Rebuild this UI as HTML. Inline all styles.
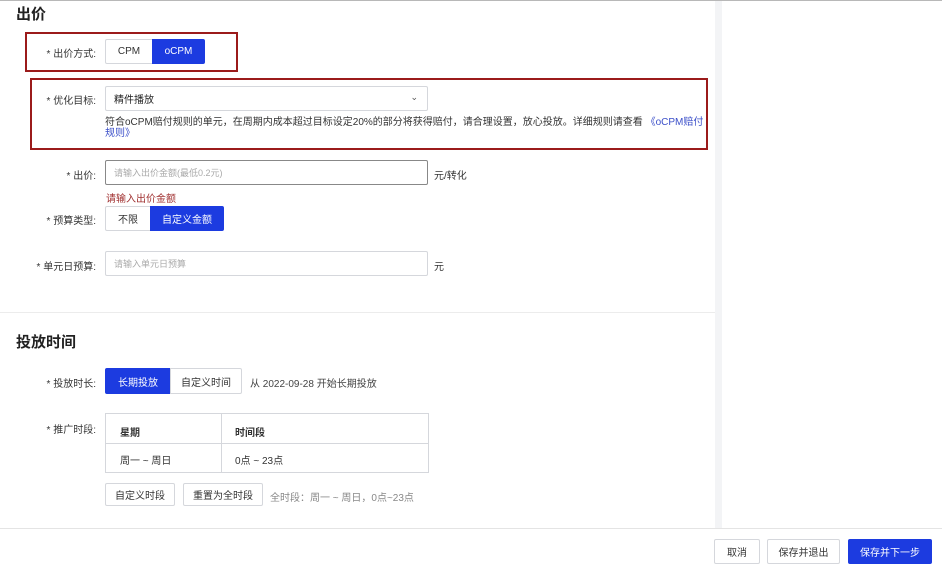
<!DOCTYPE html>
<html><head><meta charset="utf-8"><style>
*{box-sizing:border-box;margin:0;padding:0}
body{width:942px;height:568px;overflow:hidden;background:#f3f4f6;font-family:"Liberation Sans","Noto Sans CJK SC",sans-serif;font-size:10px;color:#333;position:relative}
.a{position:absolute}
.main{left:0;top:1px;width:715px;height:527px;background:#fff}
.right{left:722px;top:1px;width:220px;height:527px;background:#fff}
.h{font-size:15px;font-weight:bold;color:#222}
.lbl{font-size:10px;color:#333;text-align:right;width:96px;left:0}
.btn{position:absolute;border:1px solid #d5d7dc;background:#fff;font-size:10px;display:flex;align-items:center;justify-content:center;color:#333}
.pri{background:#1c3be0;color:#fff;border-color:#1c3be0}
.inp{position:absolute;border:1px solid #d5d7dc;border-radius:2px;background:#fff;font-size:9px;color:#aaa;padding-left:8px;display:flex;align-items:center}
.red{position:absolute;border:2px solid #9b1b1b}
</style></head><body>
<div class="a" style="left:0;top:0;width:942px;height:1px;background:#b8b8b8"></div>
<div class="a main"></div>
<div class="a right"></div>
<div class="a h" style="left:16px;top:3px">出价</div>

<div class="red" style="left:25px;top:32px;width:213px;height:40px"></div>
<div class="a lbl" style="top:45px">* 出价方式:</div>
<div class="btn" style="left:105px;top:39px;width:48px;height:25px;border-radius:2px 0 0 2px">CPM</div>
<div class="btn pri" style="left:152px;top:39px;width:53px;height:25px;border-radius:0 2px 2px 0">oCPM</div>

<div class="red" style="left:30px;top:78px;width:678px;height:72px"></div>
<div class="a lbl" style="top:92px">* 优化目标:</div>
<div class="inp" style="left:105px;top:86px;width:323px;height:25px;color:#222;font-size:10px">精件播放<span style="position:absolute;right:9px;top:5px;font-size:9px;color:#555">⌄</span></div>
<div class="a" style="left:105px;top:117px;width:600px;font-size:10px;line-height:11px;color:#333">符合oCPM赔付规则的单元，在周期内成本超过目标设定20%的部分将获得赔付，请合理设置，放心投放。详细规则请查看 <span style="color:#3b4fc9">《oCPM赔付规则》</span></div>

<div class="a lbl" style="top:167px">* 出价:</div>
<div class="inp" style="left:105px;top:160px;width:323px;height:25px;border-color:#888">请输入出价金额(最低0.2元)</div>
<div class="a" style="left:434px;top:167px">元/转化</div>
<div class="a" style="left:106px;top:190px;color:#a03030">请输入出价金额</div>

<div class="a lbl" style="top:212px">* 预算类型:</div>
<div class="btn" style="left:105px;top:206px;width:46px;height:25px;border-radius:2px 0 0 2px">不限</div>
<div class="btn pri" style="left:150px;top:206px;width:74px;height:25px;border-radius:0 2px 2px 0">自定义金额</div>

<div class="a lbl" style="top:258px">* 单元日预算:</div>
<div class="inp" style="left:105px;top:251px;width:323px;height:25px">请输入单元日预算</div>
<div class="a" style="left:434px;top:258px">元</div>

<div class="a" style="left:0;top:312px;width:715px;height:1px;background:#ececec"></div>
<div class="a h" style="left:16px;top:331px">投放时间</div>

<div class="a" style="left:0;top:375px;width:96px;text-align:right">* 投放时长:</div>
<div class="btn pri" style="left:105px;top:368px;width:66px;height:26px;border-radius:2px 0 0 2px">长期投放</div>
<div class="btn" style="left:170px;top:368px;width:72px;height:26px;border-radius:0 2px 2px 0">自定义时间</div>
<div class="a" style="left:250px;top:375px;color:#444">从 2022-09-28 开始长期投放</div>

<div class="a" style="left:0;top:421px;width:96px;text-align:right">* 推广时段:</div>
<div class="a" style="left:105px;top:413px;width:324px;height:60px;border:1px solid #d5d7dc">
 <div class="a" style="left:0;top:29px;width:322px;height:1px;background:#d5d7dc"></div>
 <div class="a" style="left:115px;top:0;width:1px;height:58px;background:#d5d7dc"></div>
 <div class="a" style="left:14px;top:10px;font-weight:bold">星期</div>
 <div class="a" style="left:129px;top:10px;font-weight:bold">时间段</div>
 <div class="a" style="left:14px;top:38px">周一 ~ 周日</div>
 <div class="a" style="left:129px;top:38px">0点 ~ 23点</div>
</div>
<div class="btn" style="left:105px;top:483px;width:70px;height:23px;border-radius:2px">自定义时段</div>
<div class="btn" style="left:183px;top:483px;width:80px;height:23px;border-radius:2px">重置为全时段</div>
<div class="a" style="left:270px;top:489px;color:#888">全时段：周一 ~ 周日，0点~23点</div>

<div class="a" style="left:0;top:528px;width:942px;height:40px;background:#fff;border-top:1px solid #e4e4e4"></div>
<div class="btn" style="left:714px;top:539px;width:46px;height:25px;border-radius:2px">取消</div>
<div class="btn" style="left:767px;top:539px;width:73px;height:25px;border-radius:2px">保存并退出</div>
<div class="btn pri" style="left:848px;top:539px;width:84px;height:25px;border-radius:2px">保存并下一步</div>
</body></html>
